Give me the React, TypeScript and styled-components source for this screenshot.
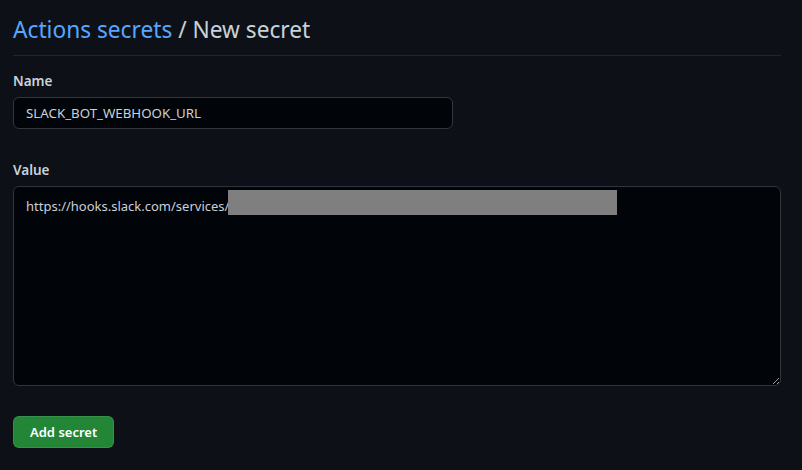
import React from "react";
import styled, { createGlobalStyle } from "styled-components";

const Global = createGlobalStyle`
  html, body { margin: 0; padding: 0; background: #0d1117; }
  body { font-family: "Noto Sans", "Open Sans", sans-serif; color: #c9d1d9; }
  * { box-sizing: border-box; }
`;

const Page = styled.div`
  width: 802px;
  height: 470px;
  padding: 12px 21px 0 13px;
  display: flex;
  flex-direction: column;
`;

const Header = styled.div`
  border-bottom: 1px solid #21262d;
  padding-bottom: 7px;
  margin-bottom: 15px;
`;

const Title = styled.h2`
  margin: 0;
  font-size: 22.7px;
  font-weight: 400;
  line-height: 36px;
  color: #c9d1d9;
`;

const Crumb = styled.a`
  color: #58a6ff;
  text-decoration: none;
`;

const Group = styled.div`
  display: flex;
  flex-direction: column;
  margin-bottom: ${(p: { $mb: number }) => p.$mb}px;
`;

const Label = styled.label`
  font-size: 13.5px;
  font-weight: 600;
  line-height: 20px;
  color: #c9d1d9;
  margin-bottom: 6px;
`;

const Input = styled.input`
  width: 440px;
  height: 32px;
  padding: 0 12px;
  background: #010409;
  border: 1px solid #30363d;
  border-radius: 6px;
  color: #c9d1d9;
  font-family: inherit;
  font-size: 13.3px;
  outline: none;
`;

const AreaWrap = styled.div`
  position: relative;
  width: 768px;
`;

const Area = styled.textarea`
  display: block;
  width: 768px;
  height: 200px;
  padding: 9px 12px;
  background: #010409;
  border: 1px solid #30363d;
  border-radius: 6px;
  color: #c9d1d9;
  font-family: inherit;
  font-size: 13px;
  line-height: 20px;
  outline: none;
  resize: vertical;
  color-scheme: dark;
`;

const Redact = styled.div`
  position: absolute;
  left: 215px;
  top: 4px;
  width: 389px;
  height: 25px;
  background: #7f7f7f;
`;

const Button = styled.button`
  align-self: flex-start;
  height: 32px;
  padding: 0 16px;
  background: #238636;
  border: 1px solid rgba(240, 246, 252, 0.1);
  border-radius: 6px;
  color: #ffffff;
  font-family: inherit;
  font-size: 13px;
  font-weight: 600;
  cursor: pointer;
`;

export default function App() {
  return (
    <>
      <Global />
      <Page>
        <Header>
          <Title>
            <Crumb href="#">Actions secrets</Crumb> / New secret
          </Title>
        </Header>
        <Group $mb={31}>
          <Label>Name</Label>
          <Input defaultValue="SLACK_BOT_WEBHOOK_URL" />
        </Group>
        <Group $mb={30}>
          <Label>Value</Label>
          <AreaWrap>
            <Area defaultValue="https://hooks.slack.com/services/" />
            <Redact />
          </AreaWrap>
        </Group>
        <Button>Add secret</Button>
      </Page>
    </>
  );
}
